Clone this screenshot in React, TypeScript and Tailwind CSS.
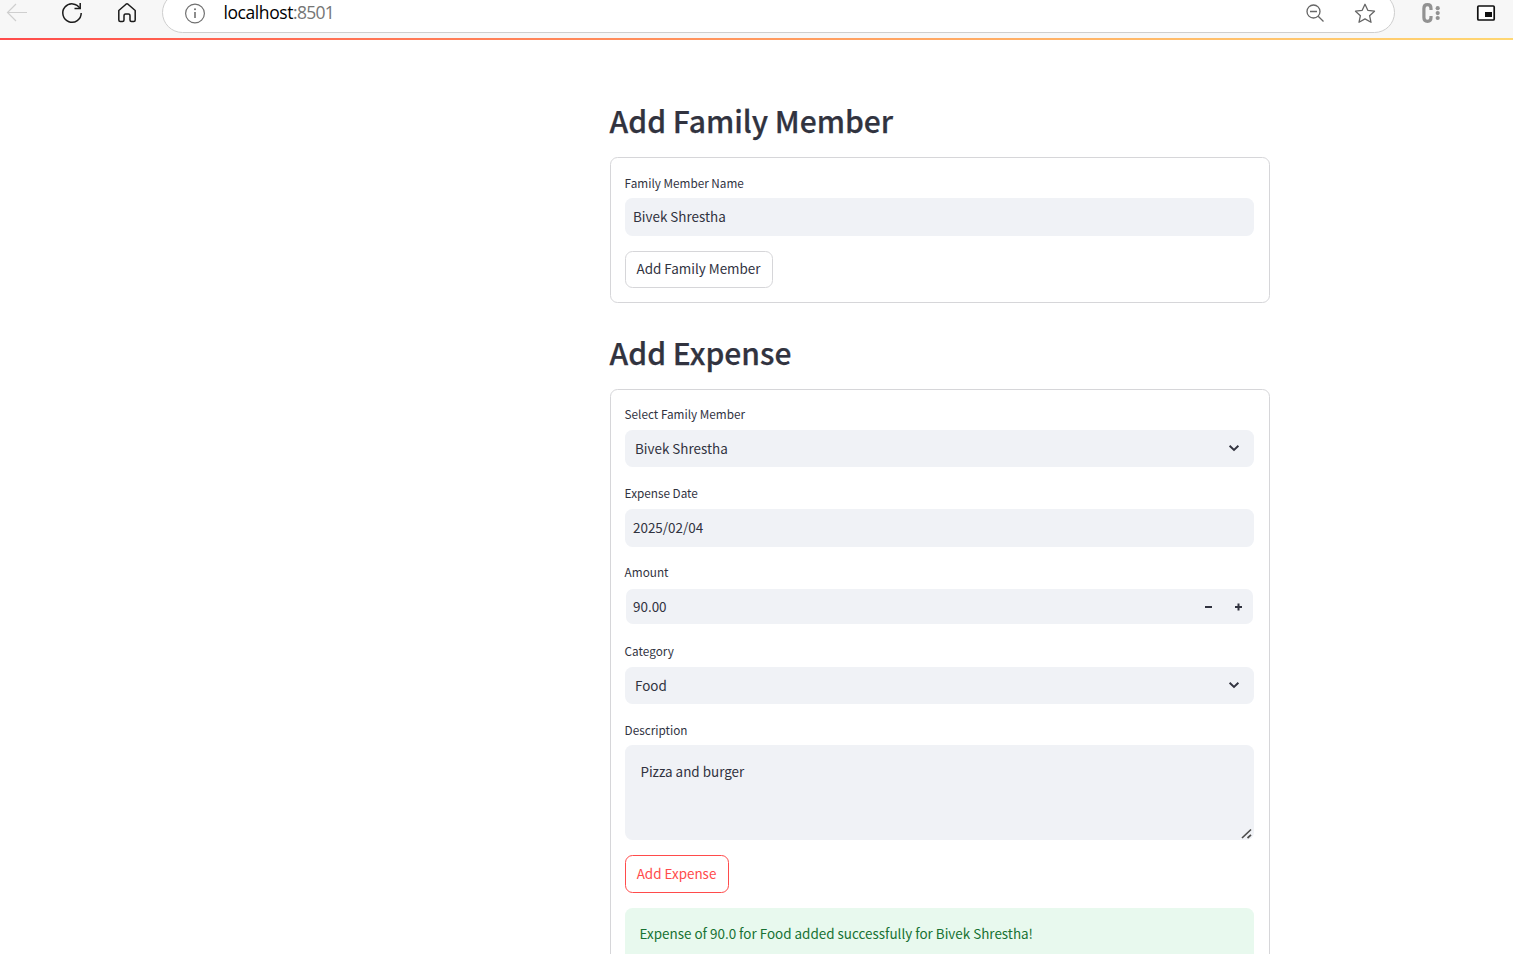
import type { ReactNode } from "react";

const sans = "font-['Noto_Sans_CJK_SC','Open_Sans',sans-serif]";

function Heading({ children }: { children: ReactNode }) {
  return (
    <h2 className="-ml-[0.4px] h-[50px] whitespace-nowrap text-[30px] leading-[47px] font-medium text-[#31333f] [-webkit-text-stroke:0.25px_#31333f]">
      {children}
    </h2>
  );
}

function Label({ children, low = false }: { children: ReactNode; low?: boolean }) {
  return (
    <div className={`-ml-[0.4px] h-[26px] text-[11.75px] whitespace-nowrap text-[#31333f] ${low ? "leading-[22px]" : "leading-[20px]"}`}>
      {children}
    </div>
  );
}

function Chevron() {
  return (
    <svg className="mr-[14px] mb-px h-3 w-3" viewBox="0 0 12 12" fill="none" stroke="#31333f" strokeWidth="1.9">
      <path d="M1.600 3.700L6 8L10.400 3.700" />
    </svg>
  );
}

function Select({ value }: { value: string }) {
  return (
    <div className="flex h-[37px] items-center justify-between rounded-[7.5px] bg-[#f0f2f6] pl-[10px]">
      <span>{value}</span>
      <Chevron />
    </div>
  );
}

function TextInput({ value }: { value: string }) {
  return (
    <div className="flex h-[38px] items-center rounded-[7.5px] bg-[#f0f2f6] pb-[2px] pl-2">{value}</div>
  );
}

function BrowserBar() {
  return (
    <div className="flex h-[38px] shrink-0 items-start overflow-hidden bg-[#f7f7f7]">
      <svg className="h-[38px] w-[162px] shrink-0" viewBox="0 0 162 38" fill="none" stroke="#1b1b1b" strokeWidth="1.5">
        <path d="M27 12.5H8M16 4L7.5 12.5L16 21" stroke="#cfcfcf" strokeWidth="1.2" />
        <path d="M80 8.5A9.2 9.2 0 1 0 81.2 13" />
        <path d="M80.2 3V8.500H74.500" />
        <path d="M118.800 10.500L126 4.200Q127 3.400 128 4.200L135.200 10.500V20Q135.200 21.500 133.700 21.500H131.500Q130 21.500 130 20V16Q130 14 128.500 14H125.500Q124 14 124 16V20Q124 21.500 122.500 21.500H120.300Q118.800 21.500 118.800 20Z" strokeLinejoin="round" />
      </svg>
      <div className="-mt-2 flex h-[41px] w-[1233px] shrink-0 items-center rounded-full border border-[#cecece] bg-white">
        <svg className="ml-[21px] h-[22px] w-[22px] shrink-0" viewBox="0 0 22 22" fill="none" stroke="#707070" strokeWidth="1.2">
          <circle cx="11" cy="11.500" r="9.400" />
          <path d="M11 10V16" strokeWidth="1.6" />
          <circle cx="11" cy="7.300" r="1" fill="#707070" stroke="none" />
        </svg>
        <div className="ml-[17.5px] font-['Open_Sans',sans-serif] text-[17.5px] tracking-[-0.42px] text-black">
          localhost<span className="tracking-[-0.7px] text-[#757575]">:8501</span>
        </div>
        <svg className="mr-[17px] ml-auto h-[22px] w-[72px]" viewBox="0 0 72 22" fill="none" stroke="#666" strokeWidth="1.3">
          <circle cx="8.500" cy="9.500" r="6.500" />
          <path d="M5 9.500H12M13.200 14.200L18.500 19.500" />
          <path d="M60 2.300L62.800 8.300L69.500 9.200L64.600 13.700L66 20.300L60 16.900L54 20.300L55.400 13.700L50.500 9.200L57.200 8.300Z" strokeLinejoin="round" />
        </svg>
      </div>
      <svg className="h-[38px] w-[118px] shrink-0" viewBox="0 0 118 38" fill="none">
        <path d="M36 10V8.500Q36 4.700 32.500 4.700Q28.900 4.700 28.900 8.500V17.500Q28.900 21.300 32.500 21.300Q36 21.300 36 17.500V16" stroke="#929292" strokeWidth="3.200" />
        <g fill="#929292">
          <circle cx="42.700" cy="8.200" r="2.100" />
          <circle cx="42.700" cy="13.100" r="2.100" />
          <circle cx="42.700" cy="18" r="2.100" />
        </g>
        <rect x="82.800" y="6" width="16.400" height="14" rx="1" stroke="#111" strokeWidth="1.700" fill="#fff" />
        <rect x="90" y="12" width="7" height="5" fill="#111" />
      </svg>
    </div>
  );
}

export default function App() {
  return (
    <div className={`flex h-[954px] w-[1513px] flex-col overflow-hidden bg-white text-[13.45px] text-[#31333f] ${sans}`}>
      <BrowserBar />
      <div className="h-[2px] shrink-0 bg-linear-to-r from-[#ff4b4b] to-[#ffd772]" />
      <main className="ml-[610px] w-[660px] pt-[57px]">
        <Heading>Add Family Member</Heading>
        <section className="mt-[10px] h-[146px] rounded-[7.5px] border border-[#d6d6d9] pt-[14px] pr-[15px] pl-[14px]">
          <Label low>Family Member Name</Label>
          <TextInput value="Bivek Shrestha" />
          <button className="mt-[15px] flex h-[37px] w-[148px] items-center justify-center rounded-[7.5px] border border-[#d6d6d9] pr-px pb-[2px] whitespace-nowrap">
            Add Family Member
          </button>
        </section>
        <div className="mt-[26px]">
          <Heading>Add Expense</Heading>
        </div>
        <section className="mt-[10px] flex h-[700px] flex-col rounded-[7.5px] border border-[#d6d6d9] pt-[14px] pr-[15px] pl-[14px]">
          <Label>Select Family Member</Label>
          <Select value="Bivek Shrestha" />
          <div className="mt-4">
            <Label>Expense Date</Label>
            <TextInput value="2025/02/04" />
          </div>
          <div className="mt-[15px]">
            <Label>Amount</Label>
            <div className="mx-px mt-px flex h-[35px] items-center justify-between rounded-[7px] bg-[#f0f2f6] pl-[7px]">
              <span>90.00</span>
              <svg className="mr-[10px] h-[10px] w-[40px]" viewBox="0 0 40 10" stroke="#31333f" strokeWidth="2">
                <path d="M2 5H9M32 5H39M35.500 1.500V8.500" />
              </svg>
            </div>
          </div>
          <div className="mt-[17px]">
            <Label>Category</Label>
            <Select value="Food" />
          </div>
          <div className="mt-[15px]">
            <Label low>Description</Label>
            <div className="flex h-[95px] items-end justify-between rounded-[7.5px] bg-[#f0f2f6] pl-[15.400px]">
              <span className="self-start pt-[14px] leading-[24px]">Pizza and burger</span>
              <svg className="mr-[2px] mb-[1px] h-[11px] w-[11px]" viewBox="0 0 11 11" stroke="#4b4b4b" strokeWidth="1.700">
                <path d="M1 10L10 1.500M6.500 10L10 6.800" />
              </svg>
            </div>
          </div>
          <button className="mt-[15px] flex h-[38px] w-[104px] items-center justify-center rounded-[7.5px] border border-[#ff4b4b] pr-px pb-[2px] whitespace-nowrap text-[#ff4b4b]">
            Add Expense
          </button>
          <div className="mt-[15px] h-[60px] rounded-[7.5px] bg-[#e8f9ee] pt-[13px] pl-[14.600px] leading-[24px] text-[#177233]">
            Expense of 90.0 for Food added successfully for Bivek Shrestha!
          </div>
        </section>
      </main>
    </div>
  );
}
